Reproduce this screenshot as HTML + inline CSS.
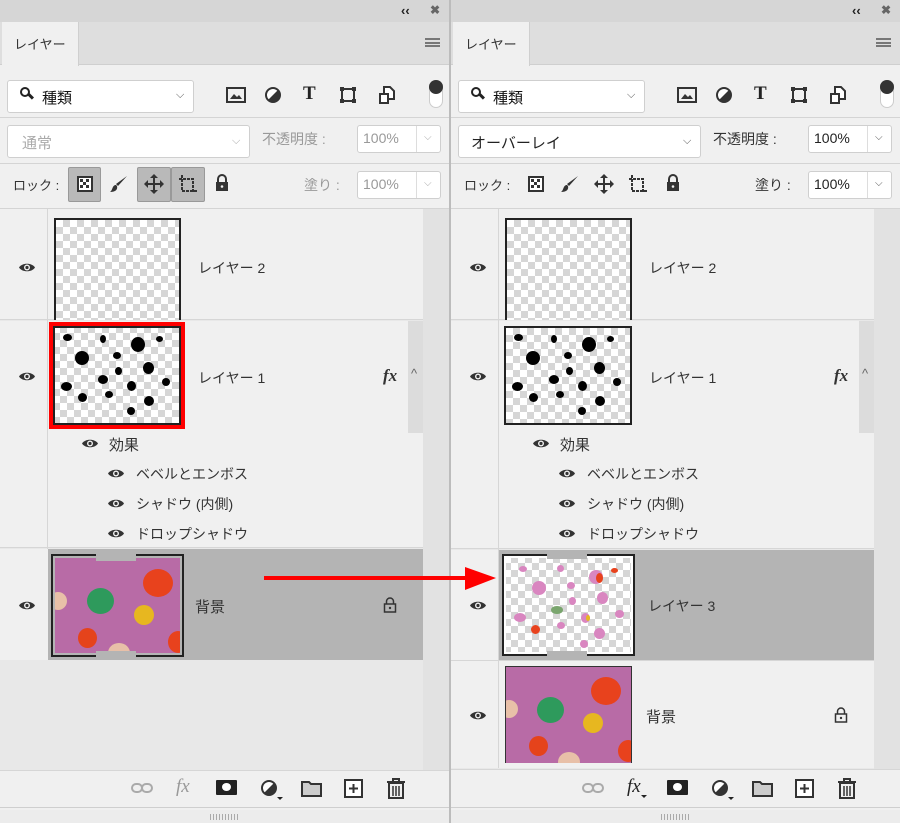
<!DOCTYPE html>
<html><head><meta charset="utf-8"><style>
*{box-sizing:border-box;margin:0;padding:0}
body{width:900px;height:823px;background:#bdbdbd;position:relative;overflow:hidden;font-family:"Liberation Sans","Noto Sans CJK JP",sans-serif;font-size:14px;color:#222}
.p{position:absolute;top:0;width:449px;height:823px;background:#f0f0f0;overflow:hidden}
.a{position:absolute}
.top{left:0;top:0;width:449px;height:22px;background:#d6d6d6}
.tabrow{left:0;top:22px;width:449px;height:43px;background:#dedede;border-bottom:1px solid #cfcfcf}
.tab{left:2px;top:22px;width:77px;height:44px;background:#f0f0f0;border-right:1px solid #cfcfcf;font-size:13px;padding:12px 0 0 12px;color:#333}
.box{background:#fff;border:1px solid #cfcfcf;border-radius:3px}
.sep{left:0;width:449px;height:1px;background:#d4d4d4}
.lbl{font-size:14px;color:#333}
.ck{background:repeating-conic-gradient(#d6d6d6 0 25%,#fff 0 50%) 0 0/14px 14px}
.dot{position:absolute;border-radius:50%}
.tb{font-weight:bold;font-size:13px}
</style></head><body>
<svg width="0" height="0" style="position:absolute"><defs>
<g id="eye"><path d="M1 5.5C4 0.5 14 0.5 17 5.5C14 10.5 4 10.5 1 5.5Z" fill="#333"/><circle cx="9" cy="5.5" r="3" fill="#f0f0f0"/><circle cx="9" cy="5.5" r="1.6" fill="#333"/></g>
</defs></svg>

<!-- ============ LEFT PANEL ============ -->
<div class="p" style="left:0">
 <div class="a top"></div>
 <div class="a tb" style="left:401px;top:3px">‹‹</div>
 <div class="a" style="left:430px;top:3px;font-size:12px;font-weight:bold;color:#666">✖</div>
 <div class="a tabrow"></div>
 <div class="a tab">レイヤー</div>
 <div class="a" style="left:425px;top:38px;width:15px;height:9px;border-top:2px solid #777;border-bottom:2px solid #777"><div style="margin-top:1.5px;height:2px;background:#777"></div></div>
 <div class="a box" style="left:7px;top:80px;width:187px;height:33px"></div>
 <div class="a" style="left:20px;top:87px;width:10px;height:10px;border:2px solid #222;border-radius:50%;background:#fff"></div>
 <div class="a" style="left:28px;top:95px;width:6px;height:2.5px;background:#222;transform:rotate(45deg)"></div>
 <div class="a lbl" style="left:42px;top:87px;font-size:15px;color:#111">種類</div>
 <div class="a" style="left:176px;top:89px;font-size:11px;color:#555">⌵</div>
 <svg class="a" style="left:226px;top:87px" width="20" height="16"><rect x="1" y="1" width="18" height="14" fill="none" stroke="#333" stroke-width="2"/><path d="M4 12L8 7L11 10L13 8L16 12Z" fill="#333"/></svg>
 <svg class="a" style="left:264px;top:86px" width="18" height="18"><circle cx="9" cy="9" r="7" fill="#fff" stroke="#333" stroke-width="2"/><path d="M14 4A7 7 0 0 1 4 14Z" fill="#333"/></svg>
 <div class="a" style="left:303px;top:83px;font:bold 19px 'Liberation Serif',serif;color:#222">T</div>
 <svg class="a" style="left:339px;top:86px" width="18" height="18"><rect x="3" y="3" width="12" height="12" fill="none" stroke="#333" stroke-width="2"/><rect x="1" y="1" width="4" height="4" fill="#333"/><rect x="13" y="1" width="4" height="4" fill="#333"/><rect x="1" y="13" width="4" height="4" fill="#333"/><rect x="13" y="13" width="4" height="4" fill="#333"/></svg>
 <svg class="a" style="left:378px;top:85px" width="18" height="20"><path d="M6 2H12L16 6V14H6Z" fill="#fff" stroke="#333" stroke-width="2"/><rect x="2" y="9" width="8" height="9" fill="#fff" stroke="#333" stroke-width="2"/></svg>
 <div class="a" style="left:429px;top:80px;width:14px;height:28px;border:1px solid #ccc;border-radius:7px;background:#fff"></div>
 <div class="a" style="left:429px;top:80px;width:14px;height:14px;border-radius:50%;background:#333"></div>
 <div class="a sep" style="top:117px"></div>
 <div class="a box" style="left:7px;top:125px;width:243px;height:33px"></div>
 <div class="a lbl" style="left:22px;top:132px;color:#aaa;font-size:15px">通常</div>
 <div class="a" style="left:232px;top:135px;font-size:11px;color:#aaa">⌵</div>
 <div class="a lbl" style="left:262px;top:129px;color:#999">不透明度 :</div>
 <div class="a box" style="left:357px;top:125px;width:84px;height:28px"></div>
 <div class="a" style="left:416px;top:126px;width:1px;height:26px;background:#ddd"></div>
 <div class="a lbl" style="left:363px;top:130px;color:#999">100%</div>
 <div class="a" style="left:424px;top:132px;font-size:10px;color:#aaa">⌵</div>
 <div class="a sep" style="top:163px"></div>
 <div class="a lbl" style="left:13px;top:175px;font-size:13px">ロック : </div>
 <div class="a" style="left:68px;top:167px;width:33px;height:35px;background:#b9b9b9;border:1px solid #999;border-radius:2px"></div>
 <div class="a" style="left:137px;top:167px;width:34px;height:35px;background:#b9b9b9;border:1px solid #999;border-radius:2px"></div>
 <div class="a" style="left:171px;top:167px;width:34px;height:35px;background:#b9b9b9;border:1px solid #999;border-radius:2px"></div>
 <svg class="a" style="left:77px;top:176px" width="16" height="16"><rect x="1" y="1" width="14" height="14" fill="#fff" stroke="#333" stroke-width="2"/><rect x="3" y="3" width="3" height="3" fill="#333"/><rect x="9" y="3" width="3" height="3" fill="#333"/><rect x="6" y="6" width="3" height="3" fill="#333"/><rect x="3" y="9" width="3" height="3" fill="#333"/><rect x="9" y="9" width="3" height="3" fill="#333"/></svg>
 <svg class="a" style="left:109px;top:174px" width="20" height="20"><path d="M18 2L9 12L7 10Z" fill="#333"/><path d="M7 11C3 11 4 16 1 18C6 18 9 16 8 12Z" fill="#333"/></svg>
 <svg class="a" style="left:144px;top:174px" width="20" height="20"><path d="M10 1V19M1 10H19" stroke="#333" stroke-width="2"/><path d="M10 0L6 4H14ZM10 20L6 16H14ZM0 10L4 6V14ZM20 10L16 6V14Z" fill="#333"/></svg>
 <svg class="a" style="left:178px;top:174px" width="20" height="20"><path d="M4 1V17H19M1 5H15V19" fill="none" stroke="#333" stroke-width="2" stroke-dasharray="3 1"/></svg>
 <svg class="a" style="left:214px;top:174px" width="16" height="18"><path d="M4 8V5A4 4 0 0 1 12 5V8" fill="none" stroke="#333" stroke-width="2"/><rect x="2" y="8" width="12" height="9" fill="#333"/><circle cx="8" cy="12.5" r="1.3" fill="#f0f0f0"/></svg>
 <div class="a lbl" style="left:304px;top:175px;color:#999">塗り :</div>
 <div class="a box" style="left:357px;top:171px;width:84px;height:28px"></div>
 <div class="a" style="left:416px;top:172px;width:1px;height:26px;background:#ddd"></div>
 <div class="a lbl" style="left:363px;top:176px;color:#999">100%</div>
 <div class="a" style="left:424px;top:178px;font-size:10px;color:#aaa">⌵</div>
 <div class="a sep" style="top:208px"></div>
 <div class="a" style="left:0;top:209px;width:449px;height:561px;background:#e8e8e8"></div>
 <div class="a" style="left:423px;top:209px;width:26px;height:561px;background:#e2e2e2"></div>
 <div class="a" style="left:0;top:209px;width:423px;height:111px;background:#f0f0f0;border-bottom:1px solid #d6d6d6"></div>
 <div class="a" style="left:0;top:321px;width:423px;height:227px;background:#f0f0f0;border-bottom:1px solid #d6d6d6"></div>
 <div class="a" style="left:408px;top:321px;width:15px;height:112px;background:#dcdcdc"></div>
 <div class="a" style="left:0;top:549px;width:48px;height:111px;background:#f0f0f0"></div>
 <div class="a" style="left:48px;top:549px;width:375px;height:111px;background:#b4b4b4"></div>
 <div class="a" style="left:47px;top:209px;width:1px;height:340px;background:#d6d6d6"></div>
 <svg class="a" style="left:18px;top:262px" width="18" height="11"><use href="#eye"/></svg>
 <svg class="a" style="left:18px;top:371px" width="18" height="11"><use href="#eye"/></svg>
 <svg class="a" style="left:18px;top:600px" width="18" height="11"><use href="#eye"/></svg>
 <div class="a ck" style="left:54px;top:218px;width:127px;height:102px;border:2px solid #222;border-bottom:none"></div>
 <div class="a lbl" style="left:198px;top:258px">レイヤー 2</div>
 <div class="a ck" style="left:49px;top:322px;width:136px;height:107px;border:4px solid #f00;outline:2px solid #222;outline-offset:-6px">
  <div class="dot" style="left:10px;top:8px;width:9px;height:7px;background:#000"></div>
  <div class="dot" style="left:47px;top:9px;width:6px;height:8px;background:#000"></div>
  <div class="dot" style="left:78px;top:11px;width:14px;height:15px;background:#000"></div>
  <div class="dot" style="left:103px;top:10px;width:7px;height:6px;background:#000"></div>
  <div class="dot" style="left:22px;top:25px;width:14px;height:14px;background:#000"></div>
  <div class="dot" style="left:60px;top:26px;width:8px;height:7px;background:#000"></div>
  <div class="dot" style="left:90px;top:36px;width:11px;height:12px;background:#000"></div>
  <div class="dot" style="left:62px;top:41px;width:7px;height:8px;background:#000"></div>
  <div class="dot" style="left:45px;top:49px;width:10px;height:9px;background:#000"></div>
  <div class="dot" style="left:8px;top:56px;width:11px;height:9px;background:#000"></div>
  <div class="dot" style="left:109px;top:52px;width:8px;height:8px;background:#000"></div>
  <div class="dot" style="left:74px;top:55px;width:9px;height:10px;background:#000"></div>
  <div class="dot" style="left:25px;top:67px;width:9px;height:9px;background:#000"></div>
  <div class="dot" style="left:52px;top:65px;width:8px;height:7px;background:#000"></div>
  <div class="dot" style="left:91px;top:70px;width:10px;height:10px;background:#000"></div>
  <div class="dot" style="left:74px;top:81px;width:8px;height:8px;background:#000"></div>
 </div>
 <div class="a lbl" style="left:198px;top:368px">レイヤー 1</div>
 <div class="a" style="left:383px;top:366px;font:italic bold 17px 'Liberation Serif',serif;color:#333">fx</div>
 <div class="a" style="left:411px;top:366px;font-size:13px;color:#666">^</div>
 <svg class="a" style="left:81px;top:438px" width="18" height="11"><use href="#eye"/></svg>
 <div class="a lbl" style="left:109px;top:434px;font-size:15px">効果</div>
 <svg class="a" style="left:107px;top:468px" width="18" height="11"><use href="#eye"/></svg>
 <div class="a lbl" style="left:136px;top:464px">ベベルとエンボス</div>
 <svg class="a" style="left:107px;top:498px" width="18" height="11"><use href="#eye"/></svg>
 <div class="a lbl" style="left:136px;top:494px">シャドウ (内側)</div>
 <svg class="a" style="left:107px;top:528px" width="18" height="11"><use href="#eye"/></svg>
 <div class="a lbl" style="left:136px;top:524px">ドロップシャドウ</div>
 <div class="a" style="left:51px;top:554px;width:133px;height:103px;border:2px solid #222;padding:2px;background:#b4b4b4">
  <div style="position:relative;width:125px;height:95px;background:#b86ba6;overflow:hidden">
   <div class="dot" style="left:88px;top:11px;width:30px;height:28px;background:#e8421d"></div>
   <div class="dot" style="left:32px;top:30px;width:27px;height:26px;background:#2e9a5c"></div>
   <div class="dot" style="left:79px;top:47px;width:20px;height:20px;background:#e7b720"></div>
   <div class="dot" style="left:23px;top:70px;width:19px;height:20px;background:#e5431b"></div>
   <div class="dot" style="left:53px;top:85px;width:22px;height:20px;background:#e8c0a8"></div>
   <div class="dot" style="left:-6px;top:34px;width:18px;height:18px;background:#e8c0a8"></div>
   <div class="dot" style="left:113px;top:73px;width:20px;height:22px;background:#e8421d"></div>
  </div>
 </div>
 <div class="a" style="left:96px;top:553px;width:40px;height:8px;background:#b4b4b4"></div>
 <div class="a" style="left:96px;top:651px;width:40px;height:8px;background:#b4b4b4"></div>
 <div class="a lbl" style="left:195px;top:596px;font-size:15px">背景</div>
 <svg class="a" style="left:383px;top:597px" width="14" height="16"><path d="M3.5 7V4.5A3.5 3.5 0 0 1 10.5 4.5V7" fill="none" stroke="#333" stroke-width="1.5"/><rect x="1.5" y="7" width="11" height="8" fill="none" stroke="#333" stroke-width="1.5"/><circle cx="7" cy="11" r="1.2" fill="#333"/></svg>
 <div class="a" style="left:0;top:770px;width:449px;height:38px;background:#f0f0f0;border-top:1px solid #d6d6d6;border-bottom:1px solid #cfcfcf"></div>
 <div class="a" style="left:0;top:810px;width:449px;height:13px;background:#ececec"></div>
 <div class="a" style="left:210px;top:814px;width:30px;height:6px;background:repeating-linear-gradient(90deg,#aaa 0 1px,transparent 1px 3px)"></div>
 <svg class="a" style="left:131px;top:781px" width="22" height="14"><rect x="1" y="3" width="10" height="8" rx="4" fill="none" stroke="#aaa" stroke-width="2"/><rect x="11" y="3" width="10" height="8" rx="4" fill="none" stroke="#aaa" stroke-width="2"/></svg>
 <div class="a" style="left:176px;top:776px;font:italic 19px 'Liberation Serif',serif;color:#999">fx</div>
 <div class="a" style="left:216px;top:780px;width:21px;height:15px;background:#222;border-radius:1px"><div style="margin:3px auto;width:9px;height:8px;border-radius:50%;background:#fff"></div></div>
 <svg class="a" style="left:260px;top:779px" width="24" height="22"><circle cx="9" cy="9" r="7" fill="#fff" stroke="#333" stroke-width="2"/><path d="M14 4A7 7 0 0 1 4 14Z" fill="#333"/><path d="M17 18H23L20 21Z" fill="#222"/></svg>
 <svg class="a" style="left:301px;top:780px" width="22" height="18"><path d="M1 2H8L10 4H20V16H1Z" fill="#ccc" stroke="#333" stroke-width="2"/></svg>
 <svg class="a" style="left:344px;top:779px" width="20" height="20"><rect x="1" y="1" width="17" height="17" fill="#fff" stroke="#333" stroke-width="2"/><path d="M9.5 5V14M5 9.5H14" stroke="#333" stroke-width="2"/></svg>
 <svg class="a" style="left:386px;top:778px" width="20" height="22"><path d="M1 4H19M7 4V1H13V4" fill="none" stroke="#333" stroke-width="2"/><path d="M3 5H17V20H3Z" fill="none" stroke="#333" stroke-width="2"/><path d="M7 8V18M10 8V18M13 8V18" stroke="#333" stroke-width="1.5"/></svg>
</div>

<div class="a" style="left:449px;top:0;width:2px;height:823px;background:#bcbcbc"></div>

<!-- ============ RIGHT PANEL ============ -->
<div class="p" style="left:451px">
 <div class="a top"></div>
 <div class="a tb" style="left:401px;top:3px">‹‹</div>
 <div class="a" style="left:430px;top:3px;font-size:12px;font-weight:bold;color:#666">✖</div>
 <div class="a tabrow"></div>
 <div class="a tab">レイヤー</div>
 <div class="a" style="left:425px;top:38px;width:15px;height:9px;border-top:2px solid #777;border-bottom:2px solid #777"><div style="margin-top:1.5px;height:2px;background:#777"></div></div>
 <div class="a box" style="left:7px;top:80px;width:187px;height:33px"></div>
 <div class="a" style="left:20px;top:87px;width:10px;height:10px;border:2px solid #222;border-radius:50%;background:#fff"></div>
 <div class="a" style="left:28px;top:95px;width:6px;height:2.5px;background:#222;transform:rotate(45deg)"></div>
 <div class="a lbl" style="left:42px;top:87px;font-size:15px;color:#111">種類</div>
 <div class="a" style="left:176px;top:89px;font-size:11px;color:#555">⌵</div>
 <svg class="a" style="left:226px;top:87px" width="20" height="16"><rect x="1" y="1" width="18" height="14" fill="none" stroke="#333" stroke-width="2"/><path d="M4 12L8 7L11 10L13 8L16 12Z" fill="#333"/></svg>
 <svg class="a" style="left:264px;top:86px" width="18" height="18"><circle cx="9" cy="9" r="7" fill="#fff" stroke="#333" stroke-width="2"/><path d="M14 4A7 7 0 0 1 4 14Z" fill="#333"/></svg>
 <div class="a" style="left:303px;top:83px;font:bold 19px 'Liberation Serif',serif;color:#222">T</div>
 <svg class="a" style="left:339px;top:86px" width="18" height="18"><rect x="3" y="3" width="12" height="12" fill="none" stroke="#333" stroke-width="2"/><rect x="1" y="1" width="4" height="4" fill="#333"/><rect x="13" y="1" width="4" height="4" fill="#333"/><rect x="1" y="13" width="4" height="4" fill="#333"/><rect x="13" y="13" width="4" height="4" fill="#333"/></svg>
 <svg class="a" style="left:378px;top:85px" width="18" height="20"><path d="M6 2H12L16 6V14H6Z" fill="#fff" stroke="#333" stroke-width="2"/><rect x="2" y="9" width="8" height="9" fill="#fff" stroke="#333" stroke-width="2"/></svg>
 <div class="a" style="left:429px;top:80px;width:14px;height:28px;border:1px solid #ccc;border-radius:7px;background:#fff"></div>
 <div class="a" style="left:429px;top:80px;width:14px;height:14px;border-radius:50%;background:#333"></div>
 <div class="a sep" style="top:117px"></div>
 <div class="a box" style="left:7px;top:125px;width:243px;height:33px"></div>
 <div class="a lbl" style="left:20px;top:132px;color:#222;font-size:15px">オーバーレイ</div>
 <div class="a" style="left:232px;top:135px;font-size:11px;color:#555">⌵</div>
 <div class="a lbl" style="left:262px;top:129px;color:#333">不透明度 :</div>
 <div class="a box" style="left:357px;top:125px;width:84px;height:28px"></div>
 <div class="a" style="left:416px;top:126px;width:1px;height:26px;background:#ddd"></div>
 <div class="a lbl" style="left:363px;top:130px;color:#222">100%</div>
 <div class="a" style="left:424px;top:132px;font-size:10px;color:#555">⌵</div>
 <div class="a sep" style="top:163px"></div>
 <div class="a lbl" style="left:13px;top:175px;font-size:13px">ロック : </div>
 <svg class="a" style="left:77px;top:176px" width="16" height="16"><rect x="1" y="1" width="14" height="14" fill="#fff" stroke="#333" stroke-width="2"/><rect x="3" y="3" width="3" height="3" fill="#333"/><rect x="9" y="3" width="3" height="3" fill="#333"/><rect x="6" y="6" width="3" height="3" fill="#333"/><rect x="3" y="9" width="3" height="3" fill="#333"/><rect x="9" y="9" width="3" height="3" fill="#333"/></svg>
 <svg class="a" style="left:109px;top:174px" width="20" height="20"><path d="M18 2L9 12L7 10Z" fill="#333"/><path d="M7 11C3 11 4 16 1 18C6 18 9 16 8 12Z" fill="#333"/></svg>
 <svg class="a" style="left:143px;top:174px" width="20" height="20"><path d="M10 1V19M1 10H19" stroke="#333" stroke-width="2"/><path d="M10 0L6 4H14ZM10 20L6 16H14ZM0 10L4 6V14ZM20 10L16 6V14Z" fill="#333"/></svg>
 <svg class="a" style="left:177px;top:174px" width="20" height="20"><path d="M4 1V17H19M1 5H15V19" fill="none" stroke="#333" stroke-width="2" stroke-dasharray="3 1"/></svg>
 <svg class="a" style="left:214px;top:174px" width="16" height="18"><path d="M4 8V5A4 4 0 0 1 12 5V8" fill="none" stroke="#333" stroke-width="2"/><rect x="2" y="8" width="12" height="9" fill="#333"/><circle cx="8" cy="12.5" r="1.3" fill="#f0f0f0"/></svg>
 <div class="a lbl" style="left:304px;top:175px;color:#333">塗り :</div>
 <div class="a box" style="left:357px;top:171px;width:84px;height:28px"></div>
 <div class="a" style="left:416px;top:172px;width:1px;height:26px;background:#ddd"></div>
 <div class="a lbl" style="left:363px;top:176px;color:#222">100%</div>
 <div class="a" style="left:424px;top:178px;font-size:10px;color:#555">⌵</div>
 <div class="a sep" style="top:208px"></div>
 <div class="a" style="left:0;top:209px;width:449px;height:561px;background:#e8e8e8"></div>
 <div class="a" style="left:423px;top:209px;width:26px;height:561px;background:#e2e2e2"></div>
 <div class="a" style="left:0;top:209px;width:423px;height:111px;background:#f0f0f0;border-bottom:1px solid #d6d6d6"></div>
 <div class="a" style="left:0;top:321px;width:423px;height:228px;background:#f0f0f0;border-bottom:1px solid #d6d6d6"></div>
 <div class="a" style="left:408px;top:321px;width:15px;height:112px;background:#dcdcdc"></div>
 <div class="a" style="left:0;top:550px;width:48px;height:110px;background:#f0f0f0"></div>
 <div class="a" style="left:48px;top:550px;width:375px;height:110px;background:#b4b4b4"></div>
 <div class="a" style="left:0;top:660px;width:423px;height:108px;background:#f0f0f0;border-top:1px solid #d6d6d6"></div>
 <div class="a" style="left:47px;top:209px;width:1px;height:559px;background:#d6d6d6"></div>
 <svg class="a" style="left:18px;top:262px" width="18" height="11"><use href="#eye"/></svg>
 <svg class="a" style="left:18px;top:371px" width="18" height="11"><use href="#eye"/></svg>
 <svg class="a" style="left:18px;top:600px" width="18" height="11"><use href="#eye"/></svg>
 <svg class="a" style="left:18px;top:710px" width="18" height="11"><use href="#eye"/></svg>
 <div class="a ck" style="left:54px;top:218px;width:127px;height:102px;border:2px solid #222;border-bottom:none"></div>
 <div class="a lbl" style="left:198px;top:258px">レイヤー 2</div>
 <div class="a ck" style="left:53px;top:326px;width:128px;height:99px;border:2px solid #222">
  <div class="dot" style="left:8px;top:6px;width:9px;height:7px;background:#000"></div>
  <div class="dot" style="left:45px;top:7px;width:6px;height:8px;background:#000"></div>
  <div class="dot" style="left:76px;top:9px;width:14px;height:15px;background:#000"></div>
  <div class="dot" style="left:101px;top:8px;width:7px;height:6px;background:#000"></div>
  <div class="dot" style="left:20px;top:23px;width:14px;height:14px;background:#000"></div>
  <div class="dot" style="left:58px;top:24px;width:8px;height:7px;background:#000"></div>
  <div class="dot" style="left:88px;top:34px;width:11px;height:12px;background:#000"></div>
  <div class="dot" style="left:60px;top:39px;width:7px;height:8px;background:#000"></div>
  <div class="dot" style="left:43px;top:47px;width:10px;height:9px;background:#000"></div>
  <div class="dot" style="left:6px;top:54px;width:11px;height:9px;background:#000"></div>
  <div class="dot" style="left:107px;top:50px;width:8px;height:8px;background:#000"></div>
  <div class="dot" style="left:72px;top:53px;width:9px;height:10px;background:#000"></div>
  <div class="dot" style="left:23px;top:65px;width:9px;height:9px;background:#000"></div>
  <div class="dot" style="left:50px;top:63px;width:8px;height:7px;background:#000"></div>
  <div class="dot" style="left:89px;top:68px;width:10px;height:10px;background:#000"></div>
  <div class="dot" style="left:72px;top:79px;width:8px;height:8px;background:#000"></div>
 </div>
 <div class="a lbl" style="left:198px;top:368px">レイヤー 1</div>
 <div class="a" style="left:383px;top:366px;font:italic bold 17px 'Liberation Serif',serif;color:#333">fx</div>
 <div class="a" style="left:411px;top:366px;font-size:13px;color:#666">^</div>
 <svg class="a" style="left:81px;top:438px" width="18" height="11"><use href="#eye"/></svg>
 <div class="a lbl" style="left:109px;top:434px;font-size:15px">効果</div>
 <svg class="a" style="left:107px;top:468px" width="18" height="11"><use href="#eye"/></svg>
 <div class="a lbl" style="left:136px;top:464px">ベベルとエンボス</div>
 <svg class="a" style="left:107px;top:498px" width="18" height="11"><use href="#eye"/></svg>
 <div class="a lbl" style="left:136px;top:494px">シャドウ (内側)</div>
 <svg class="a" style="left:107px;top:528px" width="18" height="11"><use href="#eye"/></svg>
 <div class="a lbl" style="left:136px;top:524px">ドロップシャドウ</div>
 <div class="a ck" style="left:51px;top:554px;width:133px;height:102px;border:2px solid #222;box-shadow:inset 0 0 0 2px #fff">
  <div class="dot" style="left:15px;top:10px;width:8px;height:6px;background:#d986c0"></div>
  <div class="dot" style="left:53px;top:9px;width:7px;height:7px;background:#d986c0"></div>
  <div class="dot" style="left:85px;top:14px;width:14px;height:14px;background:#d986c0"></div>
  <div class="dot" style="left:92px;top:17px;width:7px;height:10px;background:#e8421d"></div>
  <div class="dot" style="left:107px;top:12px;width:7px;height:5px;background:#e8421d"></div>
  <div class="dot" style="left:28px;top:25px;width:14px;height:14px;background:#d986c0"></div>
  <div class="dot" style="left:63px;top:26px;width:8px;height:7px;background:#d986c0"></div>
  <div class="dot" style="left:93px;top:36px;width:11px;height:12px;background:#d986c0"></div>
  <div class="dot" style="left:65px;top:41px;width:7px;height:8px;background:#d986c0"></div>
  <div class="dot" style="left:47px;top:50px;width:12px;height:8px;background:#7aa56e"></div>
  <div class="dot" style="left:10px;top:57px;width:12px;height:9px;background:#d986c0"></div>
  <div class="dot" style="left:111px;top:54px;width:9px;height:8px;background:#d986c0"></div>
  <div class="dot" style="left:77px;top:57px;width:9px;height:10px;background:#d986c0"></div>
  <div class="dot" style="left:82px;top:59px;width:4px;height:6px;background:#e7b720"></div>
  <div class="dot" style="left:27px;top:69px;width:9px;height:9px;background:#e8421d"></div>
  <div class="dot" style="left:53px;top:66px;width:8px;height:7px;background:#d986c0"></div>
  <div class="dot" style="left:90px;top:72px;width:11px;height:11px;background:#d986c0"></div>
  <div class="dot" style="left:76px;top:84px;width:8px;height:8px;background:#d986c0"></div>
 </div>
 <div class="a" style="left:96px;top:553px;width:40px;height:6px;background:#b4b4b4"></div>
 <div class="a" style="left:96px;top:651px;width:40px;height:6px;background:#b4b4b4"></div>
 <div class="a lbl" style="left:197px;top:596px">レイヤー 3</div>
 <div class="a" style="left:54px;top:666px;width:127px;height:97px;border:1px solid #333;border-bottom:none;background:#b86ba6;overflow:hidden">
  <div class="dot" style="left:85px;top:10px;width:30px;height:28px;background:#e8421d"></div>
  <div class="dot" style="left:31px;top:30px;width:27px;height:26px;background:#2e9a5c"></div>
  <div class="dot" style="left:77px;top:46px;width:20px;height:20px;background:#e7b720"></div>
  <div class="dot" style="left:23px;top:69px;width:19px;height:20px;background:#e5431b"></div>
  <div class="dot" style="left:52px;top:85px;width:22px;height:20px;background:#e8c0a8"></div>
  <div class="dot" style="left:-6px;top:33px;width:18px;height:18px;background:#e8c0a8"></div>
  <div class="dot" style="left:112px;top:73px;width:20px;height:22px;background:#e8421d"></div>
 </div>
 <div class="a lbl" style="left:195px;top:706px;font-size:15px">背景</div>
 <svg class="a" style="left:383px;top:707px" width="14" height="16"><path d="M3.5 7V4.5A3.5 3.5 0 0 1 10.5 4.5V7" fill="none" stroke="#333" stroke-width="1.5"/><rect x="1.5" y="7" width="11" height="8" fill="none" stroke="#333" stroke-width="1.5"/><circle cx="7" cy="11" r="1.2" fill="#333"/></svg>
 <div class="a" style="left:0;top:769px;width:449px;height:39px;background:#f0f0f0;border-top:1px solid #d6d6d6;border-bottom:1px solid #cfcfcf"></div>
 <div class="a" style="left:0;top:810px;width:449px;height:13px;background:#ececec"></div>
 <div class="a" style="left:210px;top:814px;width:30px;height:6px;background:repeating-linear-gradient(90deg,#aaa 0 1px,transparent 1px 3px)"></div>
 <svg class="a" style="left:131px;top:781px" width="22" height="14"><rect x="1" y="3" width="10" height="8" rx="4" fill="none" stroke="#aaa" stroke-width="2"/><rect x="11" y="3" width="10" height="8" rx="4" fill="none" stroke="#aaa" stroke-width="2"/></svg>
 <div class="a" style="left:176px;top:776px;font:italic 19px 'Liberation Serif',serif;color:#222">fx</div>
 <div class="a" style="left:190px;top:795px;width:0;height:0;border:3px solid transparent;border-top-color:#222"></div>
 <div class="a" style="left:216px;top:780px;width:21px;height:15px;background:#222;border-radius:1px"><div style="margin:3px auto;width:9px;height:8px;border-radius:50%;background:#fff"></div></div>
 <svg class="a" style="left:260px;top:779px" width="24" height="22"><circle cx="9" cy="9" r="7" fill="#fff" stroke="#333" stroke-width="2"/><path d="M14 4A7 7 0 0 1 4 14Z" fill="#333"/><path d="M17 18H23L20 21Z" fill="#222"/></svg>
 <svg class="a" style="left:301px;top:780px" width="22" height="18"><path d="M1 2H8L10 4H20V16H1Z" fill="#ccc" stroke="#333" stroke-width="2"/></svg>
 <svg class="a" style="left:344px;top:779px" width="20" height="20"><rect x="1" y="1" width="17" height="17" fill="#fff" stroke="#333" stroke-width="2"/><path d="M9.5 5V14M5 9.5H14" stroke="#333" stroke-width="2"/></svg>
 <svg class="a" style="left:386px;top:778px" width="20" height="22"><path d="M1 4H19M7 4V1H13V4" fill="none" stroke="#333" stroke-width="2"/><path d="M3 5H17V20H3Z" fill="none" stroke="#333" stroke-width="2"/><path d="M7 8V18M10 8V18M13 8V18" stroke="#333" stroke-width="1.5"/></svg>
</div>

<svg class="a" style="left:260px;top:566px" width="240" height="26"><path d="M4 12H210" stroke="#f00" stroke-width="4"/><path d="M205 1L236 12L205 24Z" fill="#f00"/></svg>
</body></html>
